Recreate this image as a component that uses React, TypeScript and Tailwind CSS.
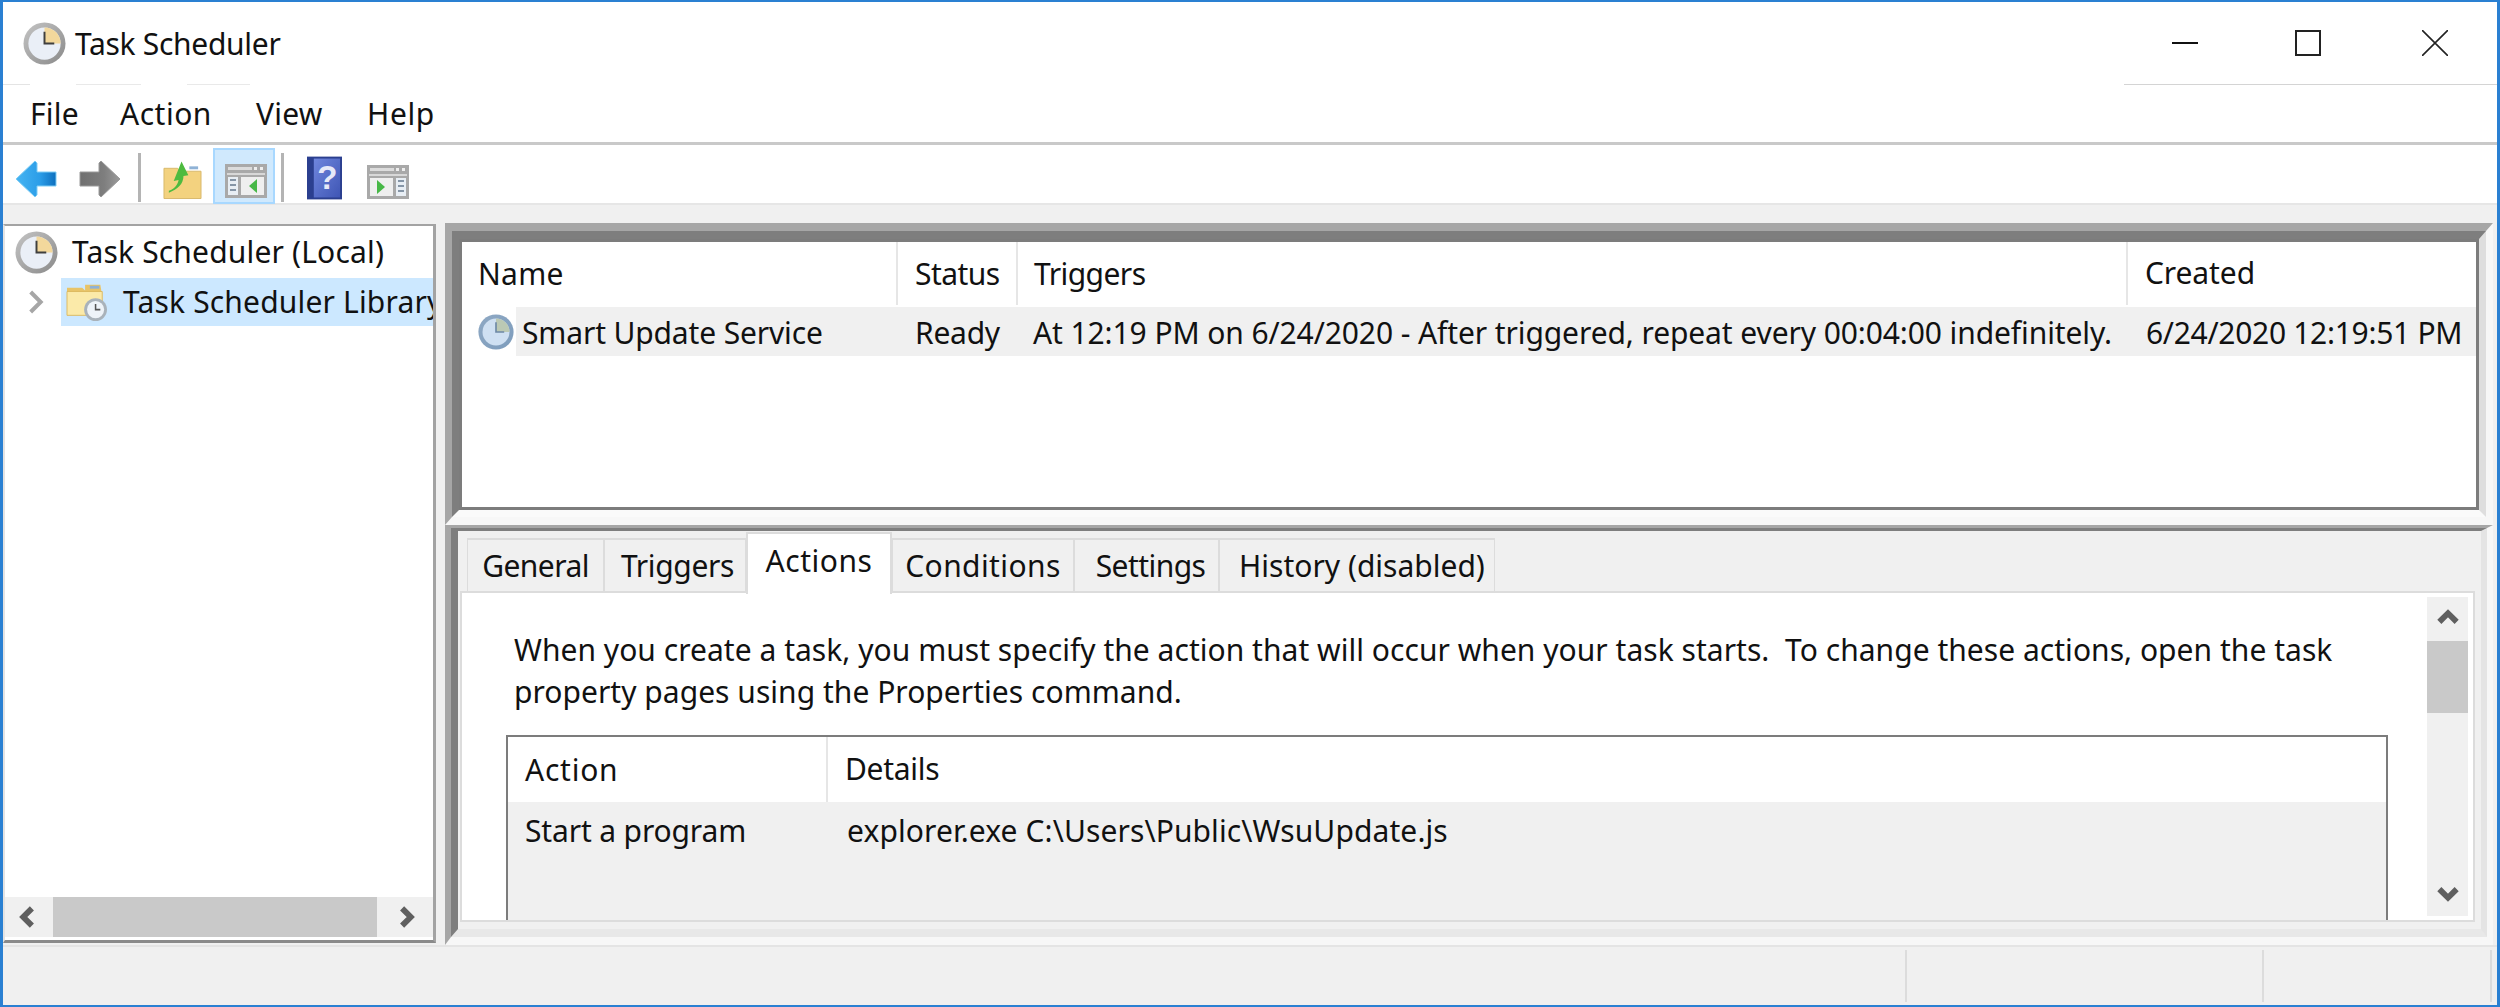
import type { ReactNode } from 'react'

const rowText = "text-[30px] text-[#111] whitespace-pre leading-none"

function ClockIcon({ className, list }: { className: string; list?: boolean }) {
  const id = list ? 'clk-list' : 'clk-main'
  return (
    <svg viewBox="0 0 44 44" className={className}>
      <defs>
        <linearGradient id={id} x1="0" y1="0" x2="1" y2="1">
          <stop offset="0" stopColor={list ? '#8fa9c4' : '#c4c4c4'} />
          <stop offset="1" stopColor={list ? '#7d9cbc' : '#8a8a8a'} />
        </linearGradient>
      </defs>
      <circle cx="22" cy="22" r="21.5" fill={`url(#${id})`} />
      <circle cx="22" cy="22" r="16.5" fill={list ? '#cfe0f2' : '#eaeff7'} />
      <path d="M22 5.500a16.500 16.500 0 0 1 16.500 16.500H22z" fill={list ? '#bcc9b4' : '#f3d89c'} />
      <path d="M22 10v12h10" fill="none" stroke={list ? '#6d88a5' : '#3f3f3f'} strokeWidth="2" />
    </svg>
  )
}

function FolderClock({ className }: { className: string }) {
  return (
    <svg viewBox="0 0 44 42" className={className}>
      <path d="M1 6h16l3 3v-6h16l1 6v24H1z" fill="#e8c468" />
      <rect x="25" y="4" width="10" height="3" fill="#8fb2d6" />
      <path d="M1 10h37v25H1z" fill="#fbeaa9" stroke="#dcb85f" />
      <circle cx="31" cy="29" r="12" fill="#a9b2ba" />
      <circle cx="31" cy="29" r="9" fill="#eef3f8" />
      <path d="M31 23v6h5" fill="none" stroke="#555" strokeWidth="1.6" />
    </svg>
  )
}

function ArrowIcon({ left, className }: { left?: boolean; className: string }) {
  const id = left ? 'arr-blue' : 'arr-gray'
  const d = left ? 'M1 19 20 1l2 2v9h19v14H22v9l-2 2z' : 'M43 19 24 1l-2 2v9H3v14h19v9l2 2z'
  return (
    <svg viewBox="0 0 44 38" className={className}>
      <defs>
        <linearGradient id={id} x1="0" y1="0" x2="1" y2="0">
          <stop offset="0" stopColor={left ? '#46b4f2' : '#6f6f6f'} />
          <stop offset="0.6" stopColor={left ? '#2b9de8' : '#7e7e7e'} />
          <stop offset="1" stopColor={left ? '#0d6fbe' : '#9b9b9b'} />
        </linearGradient>
      </defs>
      <path d={d} fill={`url(#${id})`} stroke={left ? '#7fcdf5' : '#9a9a9a'} strokeWidth="1" />
    </svg>
  )
}

function UpFolder({ className }: { className: string }) {
  return (
    <svg viewBox="0 0 40 40" className={className}>
      <path d="M1 8h14l3 3h21v28H1z" fill="#f3d27f" stroke="#d8b86c" />
      <rect x="27" y="6" width="9" height="3" fill="#8fb2d6" />
      <path d="M6 31c4-1 9-5 10-11l-5 1L19 1l7 14-5 1c0 8-6 14-15 17z" fill="#4dbb3f" />
    </svg>
  )
}

function PaneIcon({ right, className }: { right?: boolean; className: string }) {
  return (
    <svg viewBox="0 0 44 36" className={className}>
      <rect x="1" y="1" width="42" height="34" fill="#a9a9a9" />
      <rect x="4" y="4" width="24" height="3" fill="#dcdcdc" />
      <rect x="30" y="4" width="3" height="3" fill="#eee" />
      <rect x="36" y="4" width="3" height="3" fill="#eee" />
      <rect x="3" y="10" width="38" height="2" fill="#d8d8d8" />
      {right ? (
        <>
          <rect x="4" y="14" width="23" height="18" fill="#efefef" />
          <rect x="30" y="14" width="10" height="18" fill="#e8eef4" />
          <path d="M11 16v14l8-7z" fill="#47b847" />
          <path d="M32 17h6M32 22h6M32 27h6" stroke="#8595a6" strokeWidth="2" />
        </>
      ) : (
        <>
          <rect x="4" y="14" width="10" height="18" fill="#e8eef4" />
          <rect x="17" y="14" width="23" height="18" fill="#efefef" />
          <path d="M33 16v14l-8-7z" fill="#47b847" />
          <path d="M6 17h6M6 22h6M6 27h6" stroke="#8595a6" strokeWidth="2" />
        </>
      )}
    </svg>
  )
}

function HelpBook({ className }: { className: string }) {
  return (
    <svg viewBox="0 0 36 44" className={className}>
      <defs>
        <linearGradient id="book" x1="0" y1="0" x2="1" y2="1">
          <stop offset="0" stopColor="#6f86dd" />
          <stop offset="1" stopColor="#3f56b5" />
        </linearGradient>
      </defs>
      <rect x="0" y="0" width="36" height="44" fill="#2b3f8f" />
      <rect x="7" y="2" width="27" height="40" fill="url(#book)" />
      <text x="21" y="33" textAnchor="middle" fontFamily="Liberation Sans" fontWeight="700" fontSize="34" fill="#e6e9f8">?</text>
    </svg>
  )
}

function Chevron({ dir, className }: { dir: 'left' | 'right' | 'up' | 'down'; className: string }) {
  const d = {
    left: 'M11 3 5 9l6 6',
    right: 'M7 3l6 6-6 6',
    up: 'M3 11l6-6 6 6',
    down: 'M3 7l6 6 6-6',
  }[dir]
  return (
    <svg viewBox="0 0 18 18" className={className}>
      <path d={d} fill="none" stroke="#5f5f5f" strokeWidth="4" />
    </svg>
  )
}

function Sunken({ className, children }: { className: string; children: ReactNode }) {
  return (
    <div className={`border-t-[8px] border-l-[7px] border-r-[7px] border-b-[8px] border-t-[#a6a6a6] border-l-[#a6a6a6] border-r-[#f7f7f7] border-b-[#f7f7f7] ${className}`}>
      <div className="h-full border-t-[8px] border-l-[7px] border-r-[7px] border-b-[7px] border-t-[#7e7e7e] border-l-[#7e7e7e] border-r-[#dedede] border-b-[#fafafa]">
        <div className="h-full border-[3px] border-[#7c7c7c] bg-white">{children}</div>
      </div>
    </div>
  )
}

function Tab({ label, className, active }: { label: string; className: string; active?: boolean }) {
  if (active) {
    return (
      <div className={`relative z-10 mt-px h-[62px] border-x-2 border-t-2 border-[#dcdcdc] bg-white pt-[12px] text-center ${className}`}>
        <span className={rowText}>{label}</span>
      </div>
    )
  }
  return (
    <div className={`mt-[7px] flex h-[54px] items-center justify-center border-x border-t-2 border-[#dcdcdc] ${className}`}>
      <span className={rowText}>{label}</span>
    </div>
  )
}

export default function App() {
  return (
    <div className="flex h-[1007px] w-[2500px] flex-col overflow-hidden border-y-2 border-x-[3px] border-[#2a80d2] bg-white font-['Noto_Sans',sans-serif]">
      {/* title bar */}
      <div className="relative flex h-[82px] shrink-0 items-center pl-5">
        <ClockIcon className="h-[43px] w-[43px]" />
        <span className="ml-[9px] text-[30px] tracking-[-0.3px] text-[#111]">Task Scheduler</span>
        <div className="ml-auto flex items-center">
          <div className="mr-[97px] h-[2px] w-[26px] bg-[#111]" />
          <div className="mr-[101px] h-[26px] w-[26px] border-2 border-[#222]" />
          <svg viewBox="0 0 26 26" className="mr-[49px] h-[26px] w-[26px]">
            <path d="M0 0l26 26M26 0 0 26" stroke="#222" strokeWidth="1.6" />
          </svg>
        </div>
      </div>
      {/* thin rule under the title, only drawn past the buttons' left side */}
      <div className="flex h-px shrink-0">
        <div className="w-[27px] bg-[#e4e4e4]" />
        <div className="ml-[46px] w-[65px] bg-[#e9e9e9]" />
        <div className="ml-[46px] w-[63px] bg-[#e9e9e9]" />
        <div className="ml-auto w-[373px] bg-[#d4d4d4]" />
      </div>
      {/* menu */}
      <div className="flex h-[60px] shrink-0 items-center border-b-[3px] border-[#c9c9c9] pl-[27px] text-[30px] text-[#111]">
        <span className="w-[90px] tracking-[0.25px]">File</span>
        <span className="w-[136px] tracking-[0.5px]">Action</span>
        <span className="w-[111px] tracking-[0.2px]">View</span>
        <span className="tracking-[0.65px]">Help</span>
      </div>
      {/* toolbar */}
      <div className="flex h-[60px] shrink-0 items-start border-b-2 border-[#e6e6e6]">
        <ArrowIcon left className="mt-[15px] ml-3 h-[38px] w-[44px]" />
        <ArrowIcon className="mt-[15px] ml-[18px] h-[38px] w-[44px]" />
        <div className="mt-2 ml-[17px] h-[49px] w-[3px] bg-[#b4b4b4]" />
        <UpFolder className="mt-[15px] ml-[22px] h-[40px] w-[39px]" />
        <div className="mt-[3px] ml-[11px] h-[56px] w-[62px] border-2 border-[#a8d8ff] bg-[#d0e9fd] pt-[13px] pl-[9px]">
          <PaneIcon className="h-[36px] w-[44px]" />
        </div>
        <div className="mt-2 ml-[6px] h-[49px] w-[3px] bg-[#b4b4b4]" />
        <HelpBook className="mt-[11px] ml-[23px] h-[44px] w-[35px]" />
        <PaneIcon right className="mt-[19px] ml-[24px] h-[36px] w-[44px]" />
      </div>
      {/* main */}
      <div className="flex min-h-0 flex-1 bg-[#f0f0f0] pt-[18px]">
        {/* tree */}
        <div className="mt-px flex h-[719px] w-[433px] shrink-0 flex-col border-t-2 border-r-[3px] border-b-[3px] border-l-2 border-t-[#a3a3a3] border-r-[#a3a3a3] border-b-[#8a8a8a] border-l-[#e3e3e3] bg-white">
          <div className="flex h-[52px] shrink-0 items-center pl-[10px]">
            <ClockIcon className="h-[43px] w-[43px]" />
            <span className={`ml-[14px] tracking-[0.17px] ${rowText}`}>Task Scheduler (Local)</span>
          </div>
          <div className="flex h-[48px] shrink-0 items-center">
            <Chevron dir="right" className="ml-[14px] h-[30px] w-[30px] [&_path]:stroke-[#a6a6a6] [&_path]:[stroke-width:2.4]" />
            <div className="ml-[12px] flex h-[48px] flex-1 items-center overflow-hidden bg-[#cce8ff] pl-[5px]">
              <FolderClock className="h-[40px] w-[42px] shrink-0" />
              <span className={`ml-[15px] tracking-[0.17px] ${rowText}`}>Task Scheduler Library</span>
            </div>
          </div>
          <div className="flex-1" />
          <div className="mb-[3px] flex h-[40px] shrink-0 items-center bg-[#f0f0f0]">
            <div className="flex w-[48px] items-center justify-center">
              <Chevron dir="left" className="h-[26px] w-[26px]" />
            </div>
            <div className="h-full w-[324px] bg-[#c9c9c9]" />
            <div className="flex flex-1 items-center justify-center">
              <Chevron dir="right" className="h-[26px] w-[26px]" />
            </div>
          </div>
        </div>
        {/* right side */}
        <div className="ml-[9px] flex min-w-0 flex-1 flex-col pr-[4px]">
          <Sunken className="h-[302px] shrink-0">
            <div className="flex h-[63px] items-center">
              <div className="flex h-full w-[436px] items-center border-r-2 border-[#e6e6e6] pl-[16px]">
                <span className={`tracking-[0.25px] ${rowText}`}>Name</span>
              </div>
              <div className="flex h-full w-[120px] items-center border-r-2 border-[#e6e6e6] pl-[17px]">
                <span className={`tracking-[-0.55px] ${rowText}`}>Status</span>
              </div>
              <div className="flex h-full w-[1110px] items-center border-r-2 border-[#e6e6e6] pl-[16px]">
                <span className={`tracking-[-0.55px] ${rowText}`}>Triggers</span>
              </div>
              <div className="pl-[17px]">
                <span className={`tracking-[-0.1px] ${rowText}`}>Created</span>
              </div>
            </div>
            <div className="mt-[2px] flex h-[49px] items-center">
              <div className="flex h-full w-[54px] items-center pl-[16px]">
                <ClockIcon list className="h-[36px] w-[36px]" />
              </div>
              <div className="flex h-full flex-1 items-center bg-[#f0f0f0] pt-[4px]">
                <div className="w-[382px] pl-[6px]"><span className={`tracking-[-0.15px] ${rowText}`}>Smart Update Service</span></div>
                <div className="w-[120px] pl-[17px]"><span className={`tracking-[-0.25px] ${rowText}`}>Ready</span></div>
                <div className="w-[1110px] pl-[15px]"><span className={`tracking-[-0.1px] ${rowText}`}>At 12:19 PM on 6/24/2020 - After triggered, repeat every 00:04:00 indefinitely.</span></div>
                <div className="pl-[18px]"><span className={`tracking-[-0.3px] ${rowText}`}>6/24/2020 12:19:51 PM</span></div>
              </div>
            </div>
          </Sunken>
          {/* lower pane */}
          <div className="h-[420px] shrink-0 border-t-[3px] border-l-[6px] border-r-[6px] border-b-[8px] border-t-[#a6a6a6] border-l-[#a6a6a6] border-r-[#f7f7f7] border-b-[#f7f7f7]">
            <div className="flex h-full flex-col border-t-[3px] border-l-[7px] border-r-[6px] border-b-[8px] border-t-[#7e7e7e] border-l-[#7e7e7e] border-r-[#e4e4e4] border-b-[#e8e8e8] bg-[#f0f0f0] pr-[6px] pb-[7px] pl-[2px]">
              <div className="-mb-[2px] flex h-[62px] shrink-0 pl-[7px]">
                <Tab label="General" className="w-[137px] tracking-[-0.55px]" />
                <Tab label="Triggers" className="w-[142px] pl-[5px] tracking-[-0.35px]" />
                <Tab label="Actions" active className="w-[146px] tracking-[0.55px]" />
                <Tab label="Conditions" className="w-[182px] tracking-[0.4px]" />
                <Tab label="Settings" className="w-[145px] pl-[8px] tracking-[-0.55px]" />
                <Tab label="History (disabled)" className="w-[276px] pl-[10px] tracking-[0px]" />
              </div>
              <div className="flex min-h-0 flex-1 border-2 border-[#dcdcdc] bg-white">
                <div className="min-w-0 flex-1 overflow-hidden pt-[36px] pl-[44px]">
                  <p className="pl-[8px] text-[30px] leading-[42px] tracking-[0.03px] whitespace-pre text-[#111]">
                    {'When you create a task, you must specify the action that will occur when your task starts.  To change these actions, open the task\nproperty pages using the Properties command.'}
                  </p>
                  <div className="mt-[22px] h-[300px] w-[1882px] border-x-2 border-t-2 border-[#7c7c7c]">
                    <div className="flex h-[65px] items-center">
                      <div className="flex h-full w-[320px] items-center border-r-2 border-[#e6e6e6] pl-[17px]">
                        <span className={`tracking-[0.75px] ${rowText}`}>Action</span>
                      </div>
                      <div className="pl-[17px]"><span className={`tracking-[-0.3px] ${rowText}`}>Details</span></div>
                    </div>
                    <div className="flex h-[240px] items-start bg-[#f0f0f0] pt-[14px]">
                      <div className="w-[322px] pl-[17px]"><span className={`tracking-[-0.15px] ${rowText}`}>Start a program</span></div>
                      <div className="pl-[17px]"><span className={`tracking-[0.1px] ${rowText}`}>explorer.exe C:\Users\Public\WsuUpdate.js</span></div>
                    </div>
                  </div>
                </div>
                <div className="my-[4px] mr-[5px] flex w-[41px] shrink-0 flex-col items-center bg-[#f0f0f0]">
                  <div className="flex h-[44px] items-center justify-center">
                    <Chevron dir="up" className="h-[26px] w-[26px]" />
                  </div>
                  <div className="h-[72px] w-full bg-[#c9c9c9]" />
                  <div className="flex-1" />
                  <div className="flex h-[48px] items-center justify-center">
                    <Chevron dir="down" className="h-[26px] w-[26px]" />
                  </div>
                </div>
              </div>
            </div>
          </div>
        </div>
      </div>
      {/* status bar */}
      <div className="flex h-[60px] shrink-0 items-center justify-end border-t-2 border-[#e4e4e4] bg-[#f0f0f0] pr-[5px]">
        <div className="h-[52px] w-[2px] bg-[#dcdcdc]" />
        <div className="ml-[355px] h-[52px] w-[2px] bg-[#dcdcdc]" />
        <div className="ml-[226px] h-[52px] w-[2px] bg-[#dcdcdc]" />
      </div>
    </div>
  )
}
